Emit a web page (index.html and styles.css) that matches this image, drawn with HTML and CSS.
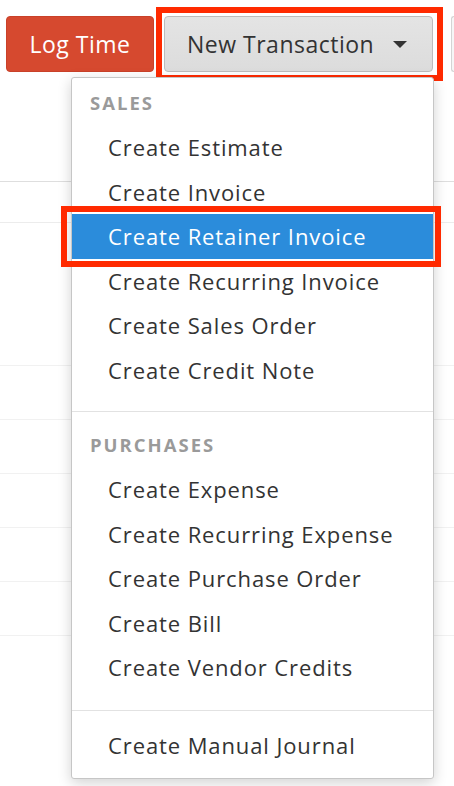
FILE: index.html
```html
<!DOCTYPE html>
<html lang="en">

<head>
    <meta charset="UTF-8">
    <meta name="viewport" content="width=device-width, initial-scale=1.0">
    <title>New Transaction</title>
    <link rel="stylesheet" href="styles.css">
</head>

<body>

    <div class="toolbar">
        <button class="btn btn-primary" type="button">Log Time</button>
        <button class="btn btn-default marked" type="button">
            New Transaction
            <span class="caret"></span>
        </button>
        <button class="btn btn-more" type="button"></button>
    </div>

    <!-- rows of the list behind the dropdown -->
    <div class="list">
        <div class="list-head"></div>
        <div class="list-row tall"></div>
        <div class="list-row"></div>
        <div class="list-row"></div>
        <div class="list-row"></div>
        <div class="list-row"></div>
        <div class="list-row"></div>
    </div>

    <ul class="dropdown">
        <li class="menu-section">
            <div class="menu-header">Sales</div>
            <a class="menu-item" href="#">Create Estimate</a>
            <a class="menu-item" href="#">Create Invoice</a>
            <a class="menu-item active marked" href="#">Create Retainer Invoice</a>
            <a class="menu-item" href="#">Create Recurring Invoice</a>
            <a class="menu-item" href="#">Create Sales Order</a>
            <a class="menu-item" href="#">Create Credit Note</a>
        </li>
        <li class="menu-section">
            <div class="menu-header">Purchases</div>
            <a class="menu-item" href="#">Create Expense</a>
            <a class="menu-item" href="#">Create Recurring Expense</a>
            <a class="menu-item" href="#">Create Purchase Order</a>
            <a class="menu-item" href="#">Create Bill</a>
            <a class="menu-item" href="#">Create Vendor Credits</a>
        </li>
        <li class="menu-section">
            <a class="menu-item" href="#">Create Manual Journal</a>
        </li>
    </ul>

</body>

</html>
```

FILE: styles.css
```css
body {
    font-family: "Open Sans", Lato, Arial, sans-serif;
    margin: 0;
    background: #fff;
    color: #333;
    overflow: hidden;
}

.toolbar {
    display: flex;
    align-items: center;
    padding: 16px 0 0 6px;
    height: 56px;
}

.btn {
    height: 56px;
    border-radius: 4px;
    font-family: inherit;
    font-size: 23px;
    letter-spacing: 0.5px;
    padding: 0;
    flex-shrink: 0;
}

.btn-primary {
    width: 148px;
    background: #d6492f;
    border: 1px solid #c94129;
    color: #fff;
}

.btn-default {
    width: 269px;
    margin-left: 10px;
    background: linear-gradient(#e4e4e4, #dcdcdc);
    border: 1px solid #bcbcbc;
    color: #333;
    display: flex;
    align-items: center;
    padding-left: 22px;
}

.caret {
    margin-left: auto;
    margin-right: 25px;
    width: 0;
    height: 0;
    border-left: 7px solid transparent;
    border-right: 7px solid transparent;
    border-top: 7px solid #333;
}

.btn-more {
    width: 3px;
    margin-left: 18px;
    background: #f6f6f6;
    border: 1px solid #d4d4d4;
    border-right: none;
    border-radius: 4px 0 0 4px;
}

/* red marker frames */
.marked {
    position: relative;
}

.marked::after {
    content: "";
    position: absolute;
    top: -10px;
    bottom: -10px;
    left: -9px;
    right: -11px;
    border: 6px solid #ff2a00;
}

.menu-item.marked::after {
    top: -8px;
    bottom: -8px;
    left: -11px;
    right: -8px;
}

.list {
    margin-top: 109px;
}

.list-head {
    height: 40px;
    border-top: 1px solid #dedede;
    border-bottom: 1px solid #ececec;
}

.list-row {
    height: 53px;
    border-bottom: 1px solid #f1f1f1;
}

.list-row.tall {
    height: 142px;
}

.dropdown {
    position: absolute;
    top: 77px;
    left: 71px;
    width: 361px;
    margin: 0;
    padding: 0;
    list-style: none;
    background: #fff;
    border: 1px solid #c6c6c6;
    border-radius: 3px;
    box-shadow: 0 4px 14px rgba(0, 0, 0, 0.18);
}

.menu-section {
    padding: 13px 0 20px;
    border-top: 1px solid #e2e2e2;
}

.menu-section:first-child {
    padding-top: 5px;
    padding-bottom: 19px;
    border-top: none;
}

.menu-section:last-child {
    padding-top: 12px;
    padding-bottom: 11px;
}

.menu-header {
    padding: 4px 18px 6px;
    line-height: 32px;
    font-size: 18.5px;
    font-weight: bold;
    letter-spacing: 2px;
    text-transform: uppercase;
    color: #9a9a9a;
}

.menu-item {
    display: block;
    height: 44.5px;
    line-height: 44.5px;
    padding-left: 36px;
    font-size: 22px;
    letter-spacing: 0.9px;
    color: #333;
    text-decoration: none;
}

.menu-item.active {
    background: #2b8cdb;
    color: #fff;
}
```
